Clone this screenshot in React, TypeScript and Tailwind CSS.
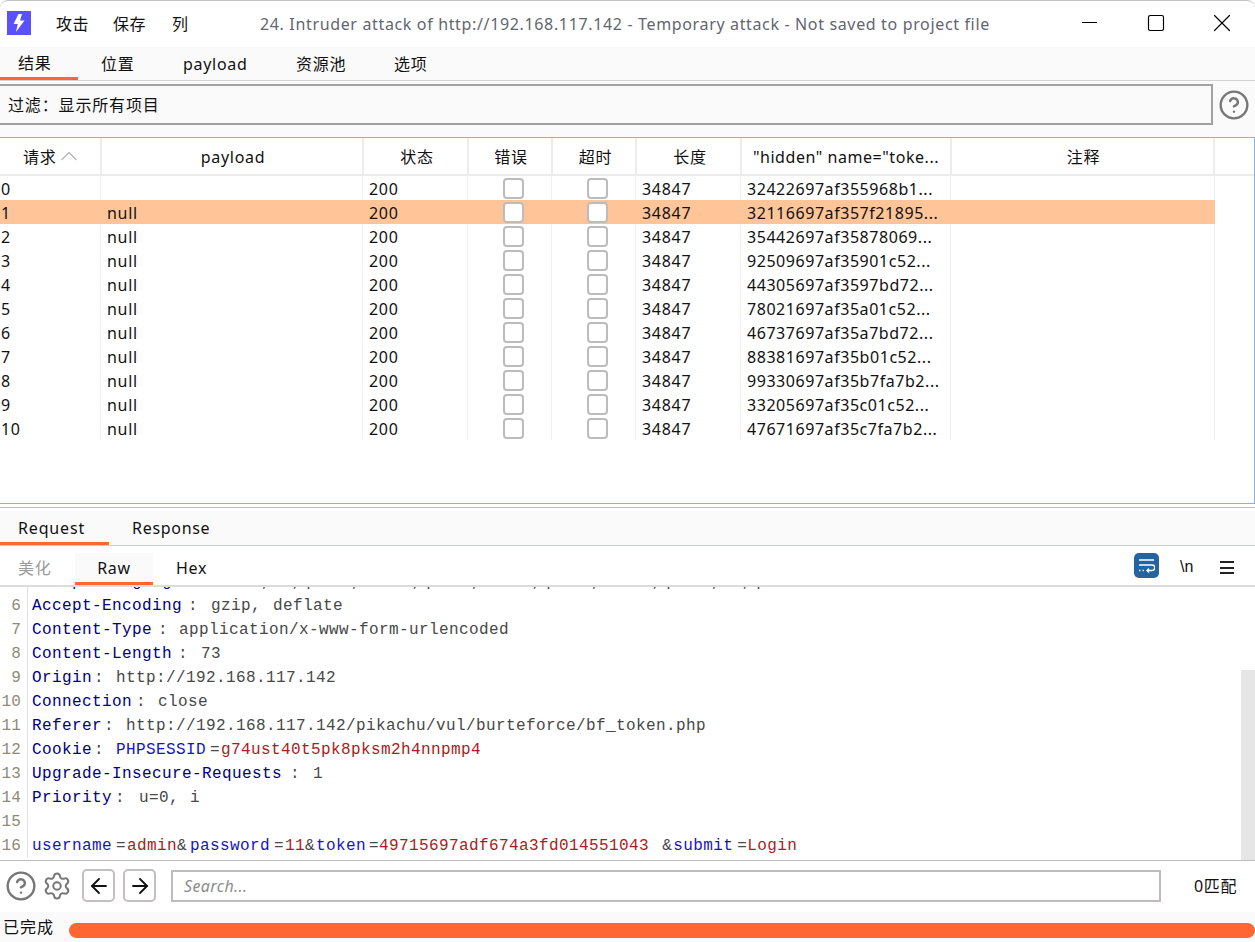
import React from 'react';
import { ArrowLeft, ArrowRight, ChevronUp, CircleHelp, Settings, Square, X } from 'lucide-react';

const rows = [
  ['0', '', '32422697af355968b1...'],
  ['1', 'null', '32116697af357f21895...'],
  ['2', 'null', '35442697af35878069...'],
  ['3', 'null', '92509697af35901c52...'],
  ['4', 'null', '44305697af3597bd72...'],
  ['5', 'null', '78021697af35a01c52...'],
  ['6', 'null', '46737697af35a7bd72...'],
  ['7', 'null', '88381697af35b01c52...'],
  ['8', 'null', '99330697af35b7fa7b2...'],
  ['9', 'null', '33205697af35c01c52...'],
  ['10', 'null', '47671697af35c7fa7b2...'],
];

function Checkbox() {
  return <div className="ml-[35px] h-[21px] w-[21px] rounded-[4px] border-2 border-[#bcbcbc] bg-white" />;
}

function Line({ n, children }: { n: number; children?: React.ReactNode }) {
  return (
    <div className="flex h-6 items-center">
      <div className="w-[28px] shrink-0 self-stretch border-r border-[#e2e2e2] pr-[6px] text-right leading-6 tracking-[0.2px] text-[#8f8a78]">{n}</div>
      <div className="whitespace-pre pl-1 text-[#484848]">{children}</div>
    </div>
  );
}

const Name = ({ children }: { children: React.ReactNode }) => <span className="text-[#000080]">{children}</span>;
const Key = ({ children }: { children: React.ReactNode }) => <span className="text-[#1414c8]">{children}</span>;
const Val = ({ children }: { children: React.ReactNode }) => <span className="text-[#a51d1d]">{children}</span>;
const Eq = () => <span className="inline-block w-[15px] pl-[4px]">=</span>;

export default function App() {
  return (
    <div className="flex h-[942px] w-[1255px] flex-col overflow-hidden rounded-t-lg border-t border-[#c4c4c4] bg-white font-['Noto_Sans','Noto_Sans_CJK_SC',sans-serif] text-[16px] tracking-[0.7px] text-[#111]">
      {/* title bar */}
      <div className="flex h-[46px] shrink-0 items-center">
        <div className="mb-[2px] ml-[7px] flex h-6 w-6 items-center justify-center bg-[#5b50ff]">
          <svg width="12" height="18" viewBox="0 0 12 18" fill="#fff">
            <path d="M5.5 0 .5 10h4.2L3 18l8.5-11.5H7L9 0z" />
          </svg>
        </div>
        <div className="ml-[25px] w-[57px] tracking-[0.4px]">攻击</div>
        <div className="w-[59px] tracking-[0.4px]">保存</div>
        <div className="w-[88px]">列</div>
        <div className="w-[822px] shrink-0 whitespace-nowrap tracking-[0.65px] text-[#5f6670]">24. Intruder attack of http://192.168.117.142 - Temporary attack - Not saved to project file</div>
        <div className="mb-[3px] h-px w-[15px] shrink-0 bg-black" />
        <Square size={20} strokeWidth={1.4} className="ml-[49px] mb-[2px] shrink-0 text-black" />
        <X size={30} strokeWidth={0.95} className="ml-[41px] mb-[2px] shrink-0 text-black" />
      </div>

      {/* main tabs */}
      <div className="flex h-[34px] shrink-0 items-center border-b border-[#d2d4d4] bg-[#fafafa]">
        <div className="flex h-full w-[78px] items-center border-b-[3px] border-[#ff6633] pl-[18px] pt-[2px]">结果</div>
        <div className="ml-[23px] w-[82px]">位置</div>
        <div className="w-[113px]">payload</div>
        <div className="w-[98px]">资源池</div>
        <div>选项</div>
      </div>

      {/* filter */}
      <div className="flex h-[56px] shrink-0 items-start bg-[#fafafa] pt-[3px]">
        <div className="flex h-[41px] w-[1213px] items-center border-y-[2px] border-r-[2px] border-[#a2a2a2] pl-2 tracking-[0.85px]">过滤：显示所有项目</div>
        <CircleHelp size={32} strokeWidth={1.8} className="ml-[5px] mt-[5px] text-[#777]" />
      </div>

      {/* results table */}
      <div className="h-[367px] shrink-0 border-y border-r border-[#8fb0dc]">
        <div className="flex h-[38px] items-center border-b-2 border-[#ececec] text-center [&>div]:flex [&>div]:h-full [&>div]:items-center [&>div]:justify-center [&>div]:border-r-2 [&>div]:border-[#ececec] [&>div]:pt-[2px]">
          <div className="w-[102px] shrink-0 !justify-start pl-[23px]">请求<ChevronUp size={28} strokeWidth={1.1} className="-ml-[1px] -mt-[2px] text-[#b5b5b5]" /></div>
          <div className="w-[262px] shrink-0 pl-[2px]">payload</div>
          <div className="w-[105px] shrink-0 pl-[3px]">状态</div>
          <div className="w-[84px] shrink-0 pl-[2px]">错误</div>
          <div className="w-[84px] shrink-0 pl-[3px]">超时</div>
          <div className="w-[105px] shrink-0 pl-[3px]">长度</div>
          <div className="w-[210px] shrink-0 whitespace-nowrap tracking-[0.55px]">"hidden" name="toke...</div>
          <div className="w-[263px] shrink-0 pl-[2px]">注释</div>
        </div>
        {rows.map((r, i) => (
          <div key={r[0]} className={`flex h-6 w-[1215px] items-center whitespace-nowrap leading-[26px] [&>div]:h-full [&>div]:border-r [&>div]:border-[#f1f1f1] ${i === 1 ? 'bg-[#ffc599] [&>div]:border-transparent' : ''}`}>
            <div className="w-[101px] shrink-0 pl-[1px]">{r[0]}</div>
            <div className="w-[262px] shrink-0 pl-[6px]">{r[1]}</div>
            <div className="w-[105px] shrink-0 pl-[6px]">200</div>
            <div className="flex w-[84px] shrink-0 items-center"><Checkbox /></div>
            <div className="flex w-[84px] shrink-0 items-center"><Checkbox /></div>
            <div className="w-[105px] shrink-0 pl-[6px]">34847</div>
            <div className="w-[210px] shrink-0 overflow-hidden pl-[6px] tracking-[0.55px]">{r[2]}</div>
            <div className="flex-1" />
          </div>
        ))}
      </div>

      {/* request / response tabs */}
      <div className="mt-[3px] h-[1px] shrink-0 bg-[#bcbcbc]" />
      <div className="mt-[3px] flex h-[35px] shrink-0 items-center border-b border-[#c8cfcf] bg-[#fafafa]">
        <div className="flex h-full w-[109px] items-center border-b-[3px] border-[#ff6633] pl-[18px] pt-[2px] tracking-[0.85px]">Request</div>
        <div className="ml-[23px]">Response</div>
      </div>

      {/* editor toolbar */}
      <div className="flex h-[41px] shrink-0 items-end border-b-2 border-[#dcdcdc]">
        <div className="mb-[5px] ml-[18px] w-[57px] text-[#9a9a9a]">美化</div>
        <div className="flex h-[32px] w-[78px] items-center justify-center border-b-[3px] border-[#ff6633] bg-[#fafafa]">Raw</div>
        <div className="mb-[5px] ml-[23px] w-[958px]">Hex</div>
        <div className="mb-[7px] flex h-[25px] w-[25px] items-center justify-center rounded-[5px] bg-[#24649f]">
          <svg width="17" height="15" viewBox="0 0 17 15" fill="none" stroke="#fff" strokeWidth="1.3">
            <path d="M1 2h15M1 7h13a2.3 2.3 0 0 1 0 5.5H9M11 10.5l-2 2 2 2M1 12.5h1.5M4.5 12.5H6" />
          </svg>
        </div>
        <div className="mb-[6px] ml-[21px] w-[16px] font-['Liberation_Sans',sans-serif] text-[16px] tracking-normal">\n</div>
        <div className="mb-[11px] ml-[24px] flex h-[13px] w-[14px] flex-col justify-between">
          <div className="h-[2px] bg-[#222]" />
          <div className="h-[2px] bg-[#222]" />
          <div className="h-[2px] bg-[#222]" />
        </div>
      </div>

      {/* message editor */}
      <div className="flex h-[273px] shrink-0 overflow-hidden font-['Liberation_Mono','Noto_Sans_CJK_SC',monospace] tracking-[0.4px]">
        <div className="-mt-[17px] min-w-0 flex-1">
          <Line n={5}><Name>Accept-Language</Name><span className="inline-block w-[29px] pl-[6px]">:</span>zh-CN,zh;q=0.8,zh-TW;q=0.7,zh-HK;q=0.5,en-US;q=0.3,en;q=0.2</Line>
          <Line n={6}><Name>Accept-Encoding</Name><span className="inline-block w-[29px] pl-[6px]">:</span>gzip,<span className="inline-block w-[12px]" />deflate</Line>
          <Line n={7}><Name>Content-Type</Name><span className="inline-block w-[27px] pl-[6px]">:</span>application/x-www-form-urlencoded</Line>
          <Line n={8}><Name>Content-Length</Name><span className="inline-block w-[29px] pl-[6px]">:</span>73</Line>
          <Line n={9}><Name>Origin</Name><span className="inline-block w-[24px] pl-[2px]">:</span>http://192.168.117.142</Line>
          <Line n={10}><Name>Connection</Name><span className="inline-block w-[26px] pl-[4px]">:</span>close</Line>
          <Line n={11}><Name>Referer</Name><span className="inline-block w-[24px] pl-[2px]">:</span>http://192.168.117.142/pikachu/vul/burteforce/bf_token.php</Line>
          <Line n={12}><Name>Cookie</Name><span className="inline-block w-[24px] pl-[2px]">:</span><Key>PHPSESSID</Key><Eq /><Val>g74ust40t5pk8pksm2h4nnpmp4</Val></Line>
          <Line n={13}><Name>Upgrade-Insecure-Requests</Name><span className="inline-block w-[31px] pl-[8px]">:</span>1</Line>
          <Line n={14}><Name>Priority</Name><span className="inline-block w-[27px] pl-[3px]">:</span>u=0,<span className="inline-block w-[11px]" />i</Line>
          <Line n={15} />
          <Line n={16}>
            <Key>username</Key><Eq /><Val>admin</Val><span className="inline-block w-[13px]">&amp;</span>
            <Key>password</Key><Eq /><Val>11</Val><span className="inline-block w-[11px]">&amp;</span>
            <Key>token</Key><span className="inline-block w-[13px] pl-[3px]">=</span><Val>49715697adf674a3fd014551043</Val>
            <span className="ml-[13px] inline-block w-[11px]">&amp;</span><Key>submit</Key><span className="inline-block w-[14px] pl-[4px]">=</span><Val>Login</Val>
          </Line>
        </div>
        <div className="mt-[83px] w-[14px] shrink-0 bg-[#e6e6e6]" />
      </div>

      {/* search bar */}
      <div className="flex h-[52px] shrink-0 items-center border-t border-[#c0bcbc] pb-[2px]">
        <CircleHelp size={32} strokeWidth={1.8} className="ml-[5px] text-[#777]" />
        <Settings size={30} strokeWidth={1.6} className="ml-[5px] text-[#777]" />
        <div className="ml-[10px] flex h-[33px] w-[33px] items-center justify-center rounded-[5px] border-2 border-[#c4c0c0]">
          <ArrowLeft size={24} strokeWidth={1.8} className="text-[#111]" />
        </div>
        <div className="ml-[8px] flex h-[33px] w-[33px] items-center justify-center rounded-[5px] border-2 border-[#c4c0c0]">
          <ArrowRight size={24} strokeWidth={1.8} className="text-[#111]" />
        </div>
        <div className="ml-[15px] flex h-[32px] w-[990px] items-center border-2 border-[#c0bcbc] pl-[11px] italic tracking-[0.4px] text-[#8c8c8c]">Search...</div>
        <div className="ml-[33px] tracking-[0.7px]">0匹配</div>
      </div>

      {/* status bar */}
      <div className="flex min-h-0 flex-1 items-center bg-[#fafafa]">
        <div className="w-[69px] pl-[3px] tracking-[1px]">已完成</div>
        <div className="mt-[7px] h-[15px] flex-1 rounded-full bg-[#ff6633]" />
      </div>
    </div>
  );
}
